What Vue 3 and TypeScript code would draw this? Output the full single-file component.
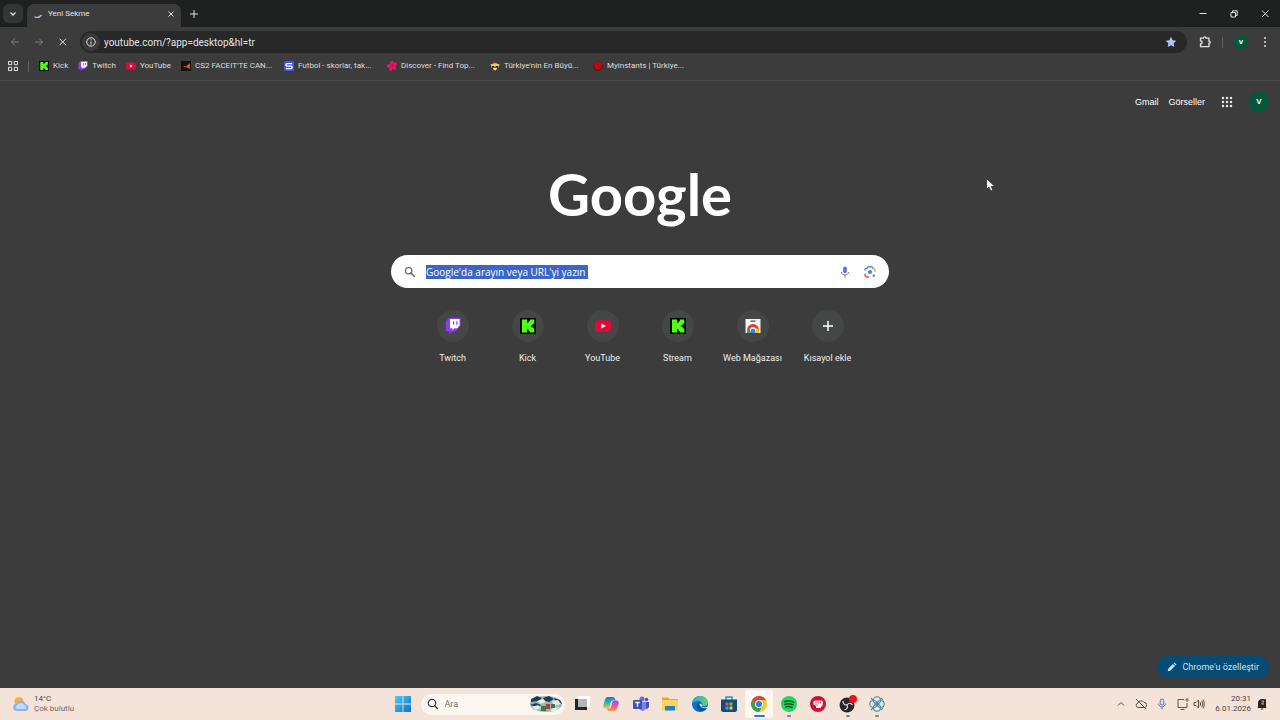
<script setup lang="ts">
import { ref } from 'vue'

type Mark = 'kick' | 'twitch' | 'youtube' | 'cs2' | 'futbol' | 'discover' | 'bee' | 'instants' | 'store'

interface LinkItem {
  icon: Mark
  label: string
}

const bookmarks: LinkItem[] = [
  { icon: 'kick', label: 'Kick' },
  { icon: 'twitch', label: 'Twitch' },
  { icon: 'youtube', label: 'YouTube' },
  { icon: 'cs2', label: "CS2 FACEIT'TE CAN..." },
  { icon: 'futbol', label: 'Futbol - skorlar, tak...' },
  { icon: 'discover', label: 'Discover - Find Top...' },
  { icon: 'bee', label: "Türkiye'nin En Büyü..." },
  { icon: 'instants', label: 'Myinstants | Türkiye...' },
]

const shortcuts: LinkItem[] = [
  { icon: 'twitch', label: 'Twitch' },
  { icon: 'kick', label: 'Kick' },
  { icon: 'youtube', label: 'YouTube' },
  { icon: 'kick', label: 'Stream' },
  { icon: 'store', label: 'Web Mağazası' },
]

const apps = [
  { id: 'desktops', name: 'Görev görünümü' },
  { id: 'copilot', name: 'Copilot' },
  { id: 'teams', name: 'Teams' },
  { id: 'files', name: 'Dosya Gezgini' },
  { id: 'edge', name: 'Edge' },
  { id: 'msstore', name: 'Microsoft Store' },
  { id: 'chrome', name: 'Chrome', active: true },
  { id: 'spotify', name: 'Spotify', open: true },
  { id: 'fist', name: 'Riot' },
  { id: 'obs', name: 'OBS', open: true },
  { id: 'atom', name: 'Atom', open: true },
]

const address = ref('youtube.com/?app=desktop&hl=tr')
const query = ref("Google'da arayın veya URL'yi yazın")
const dots = [0, 1, 2]
</script>

<template>
  <div class="screen">
    <svg class="defs" aria-hidden="true">
      <symbol id="m-kick" viewBox="0 0 16 16">
        <path fill="#050a04" d="M0 0h16v16H0z" />
        <path fill="#53fc18" d="M2 1.500h5v3.300h1.500V3.200H10V1.500h4.300v4.300h-1.600v1.500h-1.500v1.600h1.500v1.400h1.600v4.200H10v-1.600H8.500v-1.600H7v3.200H2z" />
      </symbol>
      <symbol id="m-twitch" viewBox="0 0 16 16">
        <path fill="#8b3df0" d="M4 0 .8 3.200v10h3.500V16l3.200-2.800h3L15.600 8V0z" />
        <path fill="#fff" d="M5 1h9.600v6.600l-2.400 2.600H9.500L7.400 12.300v-2.100H5z" />
        <path fill="#8b3df0" d="M8 3.200h1.200v3.600H8zM11.200 3.200h1.200v3.600h-1.200z" />
      </symbol>
      <symbol id="m-youtube" viewBox="0 0 16 16">
        <rect y="2.300" width="16" height="11.400" rx="3" fill="#e1083a" />
        <path fill="#fff" d="m6.300 5.500 4.600 2.500-4.600 2.500z" />
      </symbol>
      <symbol id="m-cs2" viewBox="0 0 16 16">
        <path fill="#111" d="M0 0h16v16H0z" />
        <path fill="#ff5a13" d="M14 3v10l-4-2.500L1.500 8.500H9z" />
      </symbol>
      <symbol id="m-futbol" viewBox="0 0 16 16">
        <rect width="16" height="16" rx="2" fill="#4351e8" />
        <path fill="none" stroke="#fff" stroke-width="2" d="M13 4H4.500L3 5.500V7l1.500 1H12l1 1.200v1.600L11.500 12H3" />
      </symbol>
      <symbol id="m-discover" viewBox="0 0 16 16">
        <path fill="#ef1463" d="M6 0h4l1 3 4-1 1 4-3 2 2 4-3 2-3-2-2 4-4-1 1-4-4-1V6l4-1z" />
        <path fill="none" stroke="#8d164c" stroke-width="1" d="M8 4v4l-4 2m4-2 3 3m-3-3 4-2" />
      </symbol>
      <symbol id="m-bee" viewBox="0 0 16 16">
        <path fill="#f4cb45" d="M2 8q1-5 6-5t6 5v2H2z" />
        <path fill="#b52b24" d="M4 3.500 8 1l4 2.500z" />
        <path fill="#292826" d="M3 8h4v2H3zm6 0h4v2H9z" />
        <path fill="#f1df9c" d="M1 5h3v2H1zm11 0h3v2h-3zM5 11h6v2l-3 2-3-2z" />
      </symbol>
      <symbol id="m-instants" viewBox="0 0 16 16">
        <circle cx="8" cy="8.500" r="7.500" fill="#650c0c" />
        <circle cx="8" cy="7.500" r="6.500" fill="#b80b0b" />
      </symbol>
      <symbol id="m-store" viewBox="0 0 16 16">
        <path fill="#f4f4f4" d="M.5 1h15v14H.5z" />
        <path fill="#50545b" d="M5.500 2.500h5v1.300h-5z" />
        <path fill="#e33b32" d="M2 12a6 6 0 0 1 12 0l-3 1H5z" />
        <path fill="#f5bd28" d="M11 9.500 14 12v3h-4z" />
        <path fill="#32a660" d="M2 11.500 5.500 10 7 15H2z" />
        <circle cx="8" cy="12" r="3" fill="#fff" />
        <path fill="#3f7de8" d="M5.700 13a2.300 2.300 0 0 1 4.600 0v2H5.700z" />
      </symbol>
    </svg>

    <header>
      <div class="tabstrip">
        <button class="tab-search" aria-label="Sekmelerde ara">
          <svg width="8" height="8" viewBox="0 0 8 8"><path class="line bold" d="m1.500 2.500 2.500 2.500 2.500-2.500" /></svg>
        </button>
        <div class="tab">
          <svg width="10" height="10" viewBox="0 0 10 10"><path fill="none" stroke="#aeb6cd" stroke-width="1.300" d="M1.500 7.800c2.700 1.200 5.300.5 7-1.800" /></svg>
          <span>Yeni Sekme</span>
          <button aria-label="Sekmeyi kapat"><svg width="8" height="8" viewBox="0 0 8 8"><path class="line" d="m1.500 1.500 5 5m0-5-5 5" /></svg></button>
        </div>
        <button class="new-tab" aria-label="Yeni sekme"><svg width="10" height="10" viewBox="0 0 10 10"><path class="line" d="M5 1v8M1 5h8" /></svg></button>
        <div class="window-buttons">
          <button aria-label="Simge durumuna küçült"><svg width="10" height="10" viewBox="0 0 10 10"><path class="line" d="M1.500 4.500h7" /></svg></button>
          <button aria-label="Geri yükle"><svg width="10" height="10" viewBox="0 0 10 10"><path class="line" d="M2 3.500h4.500V8H2zM3.500 3V1.800h4.700v4.700H7" /></svg></button>
          <button aria-label="Kapat"><svg width="10" height="10" viewBox="0 0 10 10"><path class="line" d="m2 1.500 6.500 6.500m0-6.500L2 8" /></svg></button>
        </div>
      </div>

      <div class="toolbar">
        <button class="dim" aria-label="Geri"><svg width="10" height="10" viewBox="0 0 10 10"><path class="line" d="M9 5H1.500M5 1.500 1.500 5 5 8.500" /></svg></button>
        <button class="dim" aria-label="İleri"><svg width="10" height="10" viewBox="0 0 10 10"><path class="line" d="M1 5h7.500M5 1.500 8.500 5 5 8.500" /></svg></button>
        <button aria-label="Durdur"><svg width="10" height="10" viewBox="0 0 10 10"><path class="line" d="m1.500 1.700 6.500 6.500m0-6.500L1.500 8.200" /></svg></button>
        <div class="omnibox">
          <button class="info" aria-label="Site bilgileri"><svg width="10" height="10" viewBox="0 0 10 10"><circle class="line" cx="5" cy="5" r="4.200" /><path class="line" d="M5 4.500v3M5 2.400v1" /></svg></button>
          <input v-model="address" aria-label="Adres çubuğu" spellcheck="false" />
          <button aria-label="Yer işareti"><svg width="12" height="12" viewBox="0 0 12 12"><path fill="#b4c3f9" d="m6 .8 1.600 3.400 3.700.5-2.700 2.600.7 3.700L6 9.200 2.700 11l.7-3.700L.7 4.700l3.700-.5z" /></svg></button>
        </div>
        <div class="tools">
          <button aria-label="Uzantılar"><svg width="12" height="12" viewBox="0 0 12 12"><path class="line bold" d="M1.500 2.200h3q0-1.400 1.300-1.400T7.100 2.200h2.800V5q1.300 0 1.300 1.200T9.900 7.400v3.200H1.500V7.800q1.600 0 1.600-1.500T1.500 4.800z" /></svg></button>
          <i class="divider"></i>
          <button class="avatar small" aria-label="Profil">v</button>
          <button class="menu" aria-label="Menü"><svg width="4" height="12" viewBox="0 0 4 12" fill="#ddd"><circle v-for="d in dots" :key="d" cx="2" :cy="2 + d * 4" r="1" /></svg></button>
        </div>
      </div>

      <nav class="bookmarks" aria-label="Yer işaretleri">
        <button aria-label="Sekme grupları"><svg width="10" height="10" viewBox="0 0 10 10"><path class="line" d="M.5.5h3.200v3.200H.5zM6.300.5h3.200v3.200H6.300zM.5 6.300h3.200v3.200H.5zM6.300 6.300h3.200v3.200H6.300z" /></svg></button>
        <i class="divider"></i>
        <a v-for="b in bookmarks" :key="b.label" href="#" :class="{ long: b.label.length > 10 }">
          <svg width="10" height="10"><use :href="'#m-' + b.icon" /></svg>
          <span>{{ b.label }}</span>
        </a>
      </nav>
    </header>

    <main>
      <div class="account">
        <a href="#">Gmail</a>
        <a href="#">Görseller</a>
        <button class="launcher" aria-label="Google uygulamaları">
          <svg width="12" height="12" viewBox="0 0 12 12" fill="#e8e8e8"><template v-for="r in dots" :key="r"><circle v-for="c in dots" :key="c" :cx="2 + c * 4" :cy="2 + r * 4" r="1.250" /></template></svg>
        </button>
        <button class="avatar" aria-label="Google hesabı">V</button>
      </div>

      <h1>Google</h1>

      <form class="search" @submit.prevent>
        <svg width="12" height="12" viewBox="0 0 12 12"><circle cx="4.700" cy="4.700" r="3.200" fill="none" stroke="#5c5c5c" stroke-width="1.200" /><path stroke="#5c5c5c" stroke-width="1.400" d="m7 7 3.700 3.700" /></svg>
        <input v-model="query" aria-label="Arama" spellcheck="false" />
        <button type="button" aria-label="Sesli arama">
          <svg width="12" height="12" viewBox="0 0 12 12"><rect x="4.200" y=".5" width="3.600" height="6.800" rx="1.800" fill="#4779d5" /><path fill="none" stroke="#c84d4a" d="M2.500 6c.3 4 6.700 4 7 0" /><path stroke="#9b7067" d="M6 9v2.500" /></svg>
        </button>
        <button type="button" aria-label="Görselle arama">
          <svg width="12" height="12" viewBox="0 0 12 12" fill="none" stroke-width="1.400"><path stroke="#dc5245" d="M1 7.500v1.300Q1 11 3.200 11H5" /><path stroke="#4d7bd5" d="M1 4.500V4q0-1.800 2-1.800l1-1.300h4l1 1.300h.5" /><path stroke="#dfb53d" d="M9 2.200q2 .2 2 2.300V6" /><circle cx="6" cy="6" r="2" fill="#4779d5" /><circle cx="9.800" cy="9.800" r="1.200" fill="#3b9b67" /></svg>
        </button>
      </form>

      <nav class="shortcuts" aria-label="Kısayollar">
        <a v-for="s in shortcuts" :key="s.label" href="#">
          <span class="disc"><svg width="16" height="16"><use :href="'#m-' + s.icon" /></svg></span>
          <span>{{ s.label }}</span>
        </a>
        <button>
          <span class="disc"><svg width="12" height="12" viewBox="0 0 12 12"><path stroke="#fff" stroke-width="1.500" d="M6 1v10M1 6h10" /></svg></span>
          <span>Kısayol ekle</span>
        </button>
      </nav>

      <button class="customize">
        <svg width="10" height="10" viewBox="0 0 10 10" fill="#c2e7ff"><path d="m.8 9.200.4-2.400 4.700-4.700 2 2-4.700 4.700zM6.600 1.400l.9-.9 2 2-.9.900z" /></svg>
        Chrome'u özelleştir
      </button>

      <svg class="pointer" width="10" height="14" viewBox="0 0 10 14"><path fill="#fff" stroke="#161616" stroke-width=".6" d="M.7.700v10.500l2.400-2.200 1.700 4 2-.9-1.700-3.800h3.500z" /></svg>
    </main>

    <footer>
      <button class="weather" aria-label="Hava durumu">
        <svg width="18" height="18" viewBox="0 0 18 18"><circle cx="7" cy="6.500" r="4.500" fill="#f2ae48" /><path fill="#8fb1ec" d="M4.500 16a3.700 3.700 0 0 1-.4-7.300 5 5 0 0 1 9.300.2A3.600 3.600 0 0 1 13.500 16z" /><path fill="#c4d9fa" d="M5 14a3 3 0 0 1 .4-4.500 4.200 4.200 0 0 1 7 .8 2 2 0 0 1 .8 3.700z" /></svg>
        <span>14°C<br /><em>Çok bulutlu</em></span>
      </button>

      <div class="dock">
        <button class="start" aria-label="Başlat">
          <svg width="16" height="16" viewBox="0 0 16 16"><defs><linearGradient id="win" x2="1" y2="1"><stop stop-color="#55c8f3" /><stop offset="1" stop-color="#0874c7" /></linearGradient></defs><path fill="url(#win)" d="M0 0h7.600v7.600H0zM8.400 0H16v7.600H8.400zM0 8.400h7.600V16H0zM8.400 8.400H16V16H8.400z" /></svg>
        </button>
        <label class="task-search">
          <svg width="12" height="12" viewBox="0 0 12 12"><circle cx="5" cy="5" r="3.700" fill="none" stroke="#393939" stroke-width="1.200" /><path stroke="#393939" stroke-width="1.400" d="m7.700 7.700 3.200 3.200" /></svg>
          <input placeholder="Ara" aria-label="Windows'ta ara" />
          <svg width="34" height="18" viewBox="0 0 34 18"><ellipse cx="17" cy="9" rx="16" ry="8" fill="#92b9bb" /><path fill="#263b48" d="m2 4 6-3 5 2-4 3-7 1zm12-1 6-2 5 3-5 3-4-1zm11 0 6 2 2 4-6-2zM1 10l6-2 5 2-3 2z" /><path fill="#e9eee5" d="m8 6 6-2 3 3-5 2zM23 6l6-1 3 4-7 2zM3 12l6-2 3 3-5 2zM24 13l7-1-5 4h-5z" /><path fill="#47753b" d="M12 11h5v5h-5zM22 9h4v4h-4z" /><path fill="#b23e3b" d="M17 9h4v5h-4z" /></svg>
        </label>
        <div class="apps">
          <button v-for="a in apps" :key="a.id" :aria-label="a.name" :class="{ active: a.active, open: a.open }">
            <svg v-if="a.id === 'desktops'" width="16" height="16" viewBox="0 0 16 16"><path fill="#fff" d="M4 0h12v11H4z" /><path fill="#252525" d="M1 3h12v11H1z" /><path fill="#b5b5b5" d="M4 3h9v8H4z" /></svg>
            <svg v-else-if="a.id === 'copilot'" width="16" height="16" viewBox="0 0 16 16">
              <defs><linearGradient id="cpa" x2="0" y2="1"><stop stop-color="#1c74e8" /><stop offset=".5" stop-color="#31b8a4" /><stop offset="1" stop-color="#f3c832" /></linearGradient><linearGradient id="cpb" x2="0" y2="1"><stop stop-color="#9350e8" /><stop offset=".5" stop-color="#ea5595" /><stop offset="1" stop-color="#f99a50" /></linearGradient></defs>
              <path fill="url(#cpa)" d="M4.500 1H10q1.500 0 2 2l.5 1.500H9.500q-1.200 0-1.700 1.700L6.500 11q-.4 1.500-2 1.500H2.300Q-.3 12.500.4 9L2 3.500Q2.700 1 4.500 1z" /><path fill="url(#cpb)" d="M11.500 15H6q-1.500 0-2-2l-.2-.5h2.500q1.200 0 1.700-1.700L9.500 6q.4-1.500 2-1.500h2.200q2.600 0 1.900 3.500L14 12.500q-.7 2.500-2.500 2.500z" />
            </svg>
            <svg v-else-if="a.id === 'teams'" width="16" height="16" viewBox="0 0 16 16"><circle cx="9" cy="3" r="2.500" fill="#6670d8" /><circle cx="13.500" cy="3.500" r="1.800" fill="#4a54bb" /><path fill="#7b83e6" d="M6 6h7v6q-1 4-5 2.500L6 13z" /><path fill="#4852b5" d="M13 6h3v5q-1 2.500-3 2z" /><rect y="4" width="9" height="9" rx="1" fill="#4651b6" /><path fill="none" stroke="#fff" stroke-width="1.300" d="M2.300 6.500h4.400M4.500 6.500v4.300" /></svg>
            <svg v-else-if="a.id === 'files'" width="16" height="16" viewBox="0 0 16 16"><path fill="#e9a725" d="M0 1.500h6L7.500 3H16v4H0z" /><path fill="#fbd460" d="M0 4h16v10.500H0z" /><path fill="#2084ca" d="M3 10h10v4.500H3z" /></svg>
            <svg v-else-if="a.id === 'edge'" width="16" height="16" viewBox="0 0 16 16"><defs><linearGradient id="edge" x2="1"><stop stop-color="#2ba8df" /><stop offset="1" stop-color="#61d45d" /></linearGradient></defs><circle cx="8" cy="8" r="8" fill="#0872c7" /><path fill="url(#edge)" d="M0 7.500C1-2 15.500-2.500 16 7c0 3-4.500 4-6.500 2.500.9-1.500.4-4.500-3-4.500C3 5 .5 7 0 7.500z" /><path fill="#074f9d" d="M5.500 7.500q-2.500 5 3 7.500 4 1 6.500-3-5 2-7.500-1.500-1-1.500.5-3z" /><path fill="#f3e4d9" d="M7.300 8.500q1-1.500 2.200-.2.900 1.300 0 2.200 3 2 6.500.1v1q-6 2-8.700-3.100z" /></svg>
            <svg v-else-if="a.id === 'msstore'" width="16" height="16" viewBox="0 0 16 16"><path fill="none" stroke="#2495ce" stroke-width="1.500" d="M5 4V1h6v3" /><path fill="#164b7b" d="M0 3.500h16V14q0 2-2 2H2q-2 0-2-2z" /><path fill="#ef5b3e" d="M4.500 6.500h3v3h-3z" /><path fill="#78c34b" d="M8.500 6.500h3v3h-3z" /><path fill="#32a9e8" d="M4.500 10.500h3v3h-3z" /><path fill="#fbc639" d="M8.500 10.500h3v3h-3z" /></svg>
            <svg v-else-if="a.id === 'chrome'" width="16" height="16" viewBox="0 0 16 16"><circle cx="8" cy="8" r="8" fill="#f7c72e" /><path fill="#df4537" d="M1.100 4A8 8 0 0 1 15 4H8L4.500 10z" /><path fill="#2ca255" d="M1.100 4A8 8 0 0 0 8 16l3.500-6H4.500z" /><circle cx="8" cy="8" r="4" fill="#fff" /><circle cx="8" cy="8" r="3" fill="#347be7" /></svg>
            <svg v-else-if="a.id === 'spotify'" width="16" height="16" viewBox="0 0 16 16"><circle cx="8" cy="8" r="8" fill="#1ed95e" /><path fill="none" stroke="#174927" stroke-width="1.500" stroke-linecap="round" d="M3.500 5.500q5-1.500 9.300.8M4 8.200q4.300-1.200 8 .7M4.500 10.900q3.500-1 6.500.7" /></svg>
            <svg v-else-if="a.id === 'fist'" width="16" height="16" viewBox="0 0 16 16"><circle cx="8" cy="8" r="8" fill="#d50d34" /><path fill="#fff" d="M3.500 5.500 5 4.500h7l1 1.500-.5 3.500-1.500 1.500v1H6v-2L3.500 8.500z" /><path fill="none" stroke="#d50d34" stroke-width=".7" d="M6 4.500v3.300M8.200 4.500v3.300M10.400 4.500v3.300M5 9h3" /></svg>
            <svg v-else-if="a.id === 'obs'" width="20" height="18" viewBox="0 0 20 18"><circle cx="9" cy="10" r="7.500" fill="#27262a" /><path fill="none" stroke="#ddd" stroke-width="1.200" d="M9 9.800q-4 .5-4-3.800m4.200 3.900q2.500-3.300 5.300.1M9 10q1.500 3.500-2.500 5" /><circle cx="15" cy="4" r="4" fill="#ef1117" /></svg>
            <svg v-else width="16" height="16" viewBox="0 0 16 16" fill="none" stroke="#438fad" stroke-width="1.100"><circle cx="8" cy="4.300" r="3.500" /><circle cx="11.700" cy="8" r="3.500" /><circle cx="8" cy="11.700" r="3.500" /><circle cx="4.300" cy="8" r="3.500" /><path d="m2 2 2 2m8-2 2 2M2 14l2-2m8 2 2-2" /><circle cx="8" cy="8" r="1.500" fill="#438fad" /></svg>
          </button>
        </div>
      </div>

      <div class="tray">
        <button aria-label="Gizli simgeler"><svg width="8" height="12" viewBox="0 0 8 12"><path class="ink" d="m1 7.500 3-3 3 3" /></svg></button>
        <button aria-label="OneDrive"><svg width="12" height="12" viewBox="0 0 12 12"><path class="ink" d="M3 9.500a2.300 2.300 0 0 1 0-4.500 3.300 3.300 0 0 1 6-.5 2.500 2.500 0 0 1 .5 5zM1 1l10 10" /></svg></button>
        <button aria-label="Mikrofon"><svg width="10" height="12" viewBox="0 0 10 12"><rect x="3.200" y="1" width="3.600" height="6" rx="1.800" fill="#d7dcf1" stroke="#6873ac" /><path fill="none" stroke="#6873ac" d="M1.500 5.500c.3 4.500 6.700 4.500 7 0M5 9v2.500" /></svg></button>
        <button class="sound" aria-label="Ağ ve ses">
          <svg width="12" height="12" viewBox="0 0 12 12"><path class="ink" d="M7 1.500H1v8h9V5M3.500 11.500h4M8 2.500l2-2 1.500 2M10 1v3" /></svg>
          <svg width="12" height="12" viewBox="0 0 12 12"><path class="ink" d="M1 4.500h2l2.500-2.500v8L3 7.500H1zM7 4q1.300 2 0 4M8.700 2.700q2.300 3.300 0 6.600M10.300 1.500q2.300 4.500 0 9" /></svg>
        </button>
        <button class="clock">
          <span>20:31<br />6.01.2026</span>
          <svg width="10" height="12" viewBox="0 0 10 12" role="img" aria-label="Bildirimler"><path fill="#282421" d="M1 8.500V4.500Q1.500 1 5 1l4 .2V9l.5 1h-9zM3.500 10.500h3L5 12z" /><path fill="none" stroke="#e2d5cc" stroke-width=".8" d="M4.500 3.200H7L4.700 6H7" /></svg>
        </button>
      </div>
    </footer>
  </div>
</template>

<style>
body {
  margin: 0;
  background: #3c3c3c;
}
</style>

<style scoped>
.screen {
  display: flex;
  flex-direction: column;
  min-height: 100vh;
  overflow: hidden;
  background: #3c3c3c;
  color: #e3e3e3;
  font: 8px/12px Roboto, 'Open Sans', sans-serif;
}
.defs {
  position: absolute;
  width: 0;
  height: 0;
}
button,
input {
  padding: 0;
  border: 0;
  background: none;
  color: inherit;
  font: inherit;
  outline: 0;
}
button {
  display: flex;
  align-items: center;
  justify-content: center;
}
a {
  color: inherit;
  text-decoration: none;
}
svg {
  display: block;
  flex: none;
}
.line {
  fill: none;
  stroke: #e0e0e0;
  stroke-width: 1;
}
.bold {
  stroke-width: 1.3;
}
.divider {
  width: 1px;
  height: 11px;
  background: #5d5d5d;
}
.tabstrip {
  display: flex;
  align-items: center;
  height: 27px;
  padding-left: 3px;
  background: #1f2020;
}
.tab-search {
  width: 20px;
  height: 19px;
  border-radius: 6px;
  background: #343535;
}
.tab {
  display: flex;
  align-items: center;
  gap: 5px;
  align-self: flex-end;
  box-sizing: border-box;
  width: 154px;
  height: 23px;
  margin-left: 4px;
  padding: 0 6px 4px;
  border-radius: 7px 7px 0 0;
  background: #3c3c3c;
}
.tab button {
  margin-left: auto;
}
.new-tab {
  width: 26px;
  height: 20px;
}
.window-buttons {
  display: flex;
  margin-left: auto;
}
.window-buttons button {
  width: 31px;
  height: 27px;
}
.toolbar {
  display: flex;
  align-items: center;
  height: 30px;
  padding-left: 3px;
}
.toolbar > button {
  width: 24px;
  height: 22px;
}
.dim {
  opacity: 0.4;
}
.omnibox {
  display: flex;
  flex: 1;
  align-items: center;
  height: 22px;
  margin-left: 5px;
  padding: 0 10px 0 2px;
  border-radius: 11px;
  background: #282828;
  font-size: 10px;
}
.info {
  width: 18px;
  height: 18px;
  border-radius: 9px;
  background: #3a3a3a;
}
.omnibox input {
  flex: 1;
  height: 16px;
  margin-left: 4px;
}
.tools {
  display: flex;
  align-items: center;
  gap: 11px;
  padding: 0 13px 0 12px;
}
.menu {
  padding-left: 4px;
}
.avatar {
  width: 20px;
  height: 20px;
  border-radius: 50%;
  background: #00583c;
  color: #fff;
  font: bold 8px/12px 'Liberation Sans', sans-serif;
}
.avatar.small {
  width: 14px;
  height: 14px;
}
.bookmarks {
  display: flex;
  align-items: center;
  gap: 10px;
  height: 18px;
  padding: 0 8px 5px;
  border-bottom: 1px solid #4a4a4a;
  color: #dcdcdc;
}
.bookmarks a {
  display: flex;
  align-items: center;
  gap: 4px;
  white-space: nowrap;
}
.bookmarks .long {
  width: 93px;
}
main {
  position: relative;
  display: flex;
  flex: 1;
  flex-direction: column;
  align-items: center;
}
.account {
  display: flex;
  align-items: center;
  align-self: flex-end;
  gap: 10px;
  height: 20px;
  margin: 11px 11px 0 0;
  color: #fff;
  font: 9px/12px 'Liberation Sans', sans-serif;
}
.launcher {
  margin: 0 6px;
}
h1 {
  margin: 46px 0 0;
  color: #fff;
  font: bold 58px/72px Lato, sans-serif;
}
.search {
  display: flex;
  align-items: center;
  gap: 13px;
  box-sizing: border-box;
  width: 498px;
  max-width: 100%;
  height: 33px;
  margin-top: 25px;
  padding: 0 13px;
  border-radius: 17px;
  background: #fff;
}
.search input {
  width: 162px;
  height: 14px;
  margin-right: auto;
  margin-left: -3px;
  background: #3966c8;
  color: #fff;
  font: 10px/14px 'Open Sans', sans-serif;
}
.shortcuts {
  display: flex;
  margin-top: 22px;
  color: #eee;
  font-size: 9px;
}
.shortcuts > * {
  display: flex;
  flex-direction: column;
  align-items: center;
  gap: 10px;
  width: 75px;
}
.disc {
  display: grid;
  place-items: center;
  width: 32px;
  height: 32px;
  border-radius: 50%;
  background: #454646;
}
.customize {
  align-self: flex-end;
  gap: 6px;
  height: 22px;
  margin: auto 11px 10px 0;
  padding: 0 10px;
  border-radius: 11px;
  background: #064b73;
  color: #c2e7ff;
  font-size: 9px;
}
.pointer {
  position: absolute;
  top: 97px;
  left: 77%;
}
footer {
  display: grid;
  grid-template-columns: 1fr auto 1fr;
  align-items: center;
  height: 32px;
  background: #f4e3d8;
  color: #4d4540;
}
.weather {
  justify-self: start;
  gap: 4px;
  padding-left: 12px;
  line-height: 10px;
  text-align: left;
}
.weather em {
  color: #75695f;
  font-style: normal;
}
.dock,
.apps,
.tray {
  display: flex;
  align-items: center;
}
.start {
  width: 29px;
  height: 29px;
}
.task-search {
  display: flex;
  align-items: center;
  gap: 6px;
  box-sizing: border-box;
  width: 144px;
  height: 21px;
  margin: 0 3px;
  padding: 0 2px 0 6px;
  border-radius: 11px;
  background: #fdf7f2;
}
.task-search input {
  flex: 1;
  min-width: 0;
  font-size: 9px;
}
.task-search input::placeholder {
  color: #776e69;
}
.apps {
  justify-content: space-between;
  width: 324px;
}
.apps button {
  position: relative;
  width: 28px;
  height: 28px;
  border-radius: 3px;
}
.apps .active {
  background: #fff8f2;
}
.apps .active::after,
.apps .open::after {
  position: absolute;
  bottom: 1px;
  width: 4px;
  height: 2px;
  border-radius: 1px;
  background: #8a817b;
  content: '';
}
.apps .active::after {
  width: 11px;
  background: #2c78cb;
}
.tray {
  justify-self: end;
  gap: 10px;
  padding-right: 13px;
}
.ink {
  fill: none;
  stroke: #5d534d;
  stroke-width: 1;
}
.sound {
  gap: 4px;
}
.clock {
  gap: 6px;
  line-height: 10px;
  text-align: right;
}
</style>
